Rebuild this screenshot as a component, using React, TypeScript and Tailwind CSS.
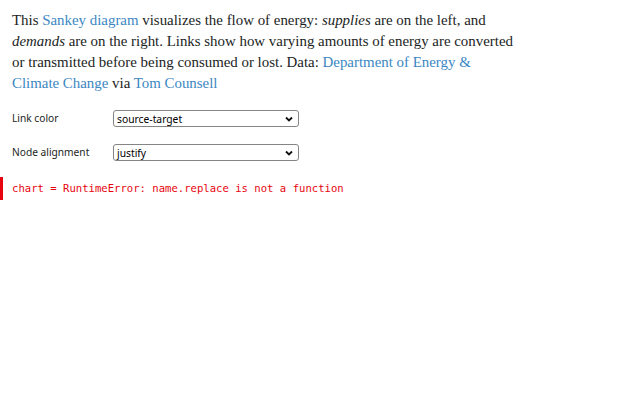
import React from "react";

function Chevron() {
  return (
    <svg width="10" height="10" viewBox="0 0 10 10" className="absolute right-[4px] top-1/2 -translate-y-1/2">
      <path d="M2 3.5 L5 6.5 L8 3.5" fill="none" stroke="#111" strokeWidth="1.8" />
    </svg>
  );
}

function Select({ value }: { value: string }) {
  return (
    <div className="relative w-[186px] h-[17px] border border-[#858585] rounded-[3px] bg-white">
      <span className="absolute left-[3px] top-1/2 -translate-y-1/2 text-[10.3px] leading-none text-black" style={{ fontFamily: '"Noto Sans", sans-serif' }}>
        {value}
      </span>
      <Chevron />
    </div>
  );
}

export default function App() {
  const serif = { fontFamily: '"Liberation Serif", serif' };
  const link = "text-[#3b87c2]";
  return (
    <div className="w-[640px] h-[400px] bg-white relative">
      <div className="pt-[10px] pl-[12px] pr-[12px]">
        <p className="text-[14.9px] leading-[21px] text-[#1b1e23] whitespace-nowrap" style={serif}>
          This <span className={link}>Sankey diagram</span> visualizes the flow of energy: <i>supplies</i> are on the left, and
          <br />
          <i>demands</i> are on the right. Links show how varying amounts of energy are converted
          <br />
          or transmitted before being consumed or lost. Data: <span className={link}>Department of Energy &amp;</span>
          <br />
          <span className={link}>Climate Change</span> via <span className={link}>Tom Counsell</span>
        </p>
        <div className="mt-[16px] flex flex-col gap-[17px]" style={{ fontFamily: '"Noto Sans", sans-serif' }}>
          <div className="flex items-center">
            <div className="w-[101px] text-[10.2px] text-[#1b1e23]">Link color</div>
            <Select value="source-target" />
          </div>
          <div className="flex items-center">
            <div className="w-[101px] text-[10.2px] text-[#1b1e23]">Node alignment</div>
            <Select value="justify" />
          </div>
        </div>
      </div>
      <div className="mt-[16px] flex items-center h-[23px] border-l-[3px] border-[#e7040f] pl-[9px]">
        <span className="text-[10.6px] text-[#e7040f]" style={{ fontFamily: '"DejaVu Sans Mono", monospace' }}>
          chart = RuntimeError: name.replace is not a function
        </span>
      </div>
    </div>
  );
}
